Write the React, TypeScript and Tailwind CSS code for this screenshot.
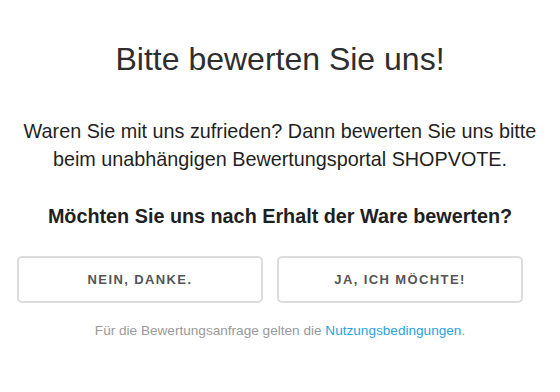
export default function App() {
  return (
    <div
      className="flex min-h-[392px] w-[560px] flex-col items-center bg-white text-center"
      style={{ fontFamily: '"Liberation Sans", Arial, Helvetica, sans-serif' }}
    >
      <h1 className="mt-[43px] text-[32px] leading-[32px] font-normal text-[#2e2e2e]">
        Bitte bewerten Sie uns!
      </h1>

      <p className="mt-[42px] text-[19.8px] leading-[28px] text-[#1f1f1f]">
        Waren Sie mit uns zufrieden? Dann bewerten Sie uns bitte
        <br />
        beim unabhängigen Bewertungsportal SHOPVOTE.
      </p>

      <p className="mt-[29px] text-[19.8px] leading-[28px] font-bold text-[#1f1f1f]">
        Möchten Sie uns nach Erhalt der Ware bewerten?
      </p>

      <div className="mt-[26px] ml-[17px] flex gap-[14px] self-start">
        <button className="h-[47px] w-[246px] rounded-[5px] border-2 border-[#dcdcdc] bg-white text-[13px] font-bold tracking-[1.4px] text-[#555]">
          NEIN, DANKE.
        </button>
        <button className="h-[47px] w-[246px] rounded-[5px] border-2 border-[#dcdcdc] bg-white text-[13px] font-bold tracking-[1.4px] text-[#555]">
          JA, ICH MÖCHTE!
        </button>
      </div>

      <p className="mt-[18px] text-[13.6px] leading-[20px] text-[#9a9a9a]">
        Für die Bewertungsanfrage gelten die{" "}
        <a href="#" className="text-[#2aa3dc]">
          Nutzungsbedingungen
        </a>
        .
      </p>
    </div>
  );
}
